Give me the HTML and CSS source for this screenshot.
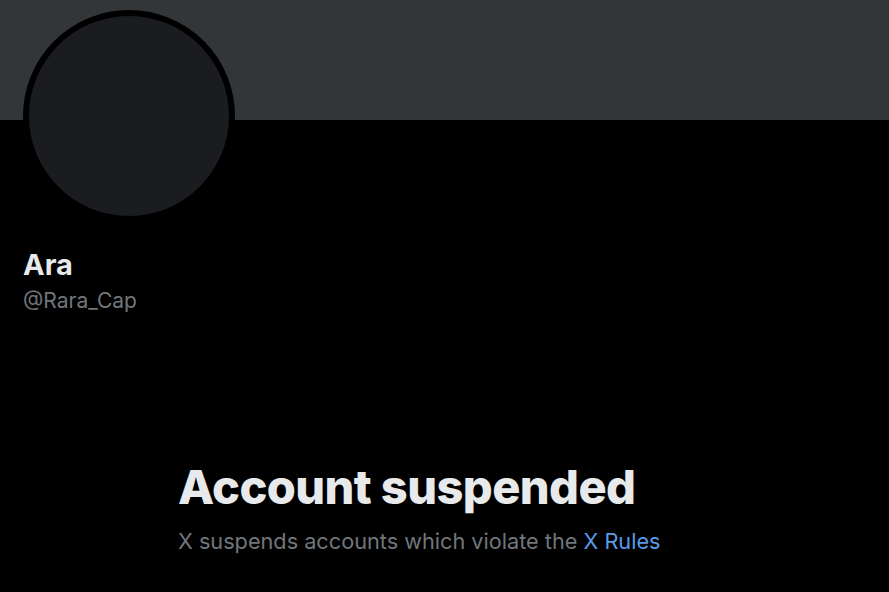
FILE: index.html
```html
<!DOCTYPE html>
<html lang="en">
<head>
<meta charset="utf-8">
<title>Ara (@Rara_Cap) / X</title>
<link rel="stylesheet" href="styles.css">
</head>
<body>
<main class="page">
  <div class="banner"></div>
  <section class="profile">
    <div class="avatar"><div class="avatar-inner"></div></div>
    <h2 class="name">Ara</h2>
    <div class="handle">@Rara_Cap</div>
  </section>
  <section class="empty">
    <h1 class="empty-title">Account suspended</h1>
    <p class="empty-text">X suspends accounts which violate the <a class="link" href="#">X Rules</a></p>
  </section>
</main>
</body>
</html>
```
FILE: styles.css
```css
html, body {
  margin: 0;
  padding: 0;
  background: #000;
}
body {
  font-family: "Inter", "Roboto", "Liberation Sans", sans-serif;
  color: #e7e9ea;
}
.page {
  width: 889px;
  height: 592px;
  overflow: hidden;
}
.banner {
  height: 120px;
  background: #333639;
}
.profile {
  padding-left: 23px;
}
.avatar {
  width: 200px;
  height: 200px;
  margin-top: -110px;
  border: 6px solid #000;
  border-radius: 50%;
  background: #000;
}
.avatar-inner {
  width: 200px;
  height: 200px;
  border-radius: 50%;
  background: #1b1c1f;
}
.name {
  margin: 26px 0 0;
  font-size: 29px;
  font-weight: 700;
  line-height: 34px;
  color: #e7e9ea;
}
.handle {
  margin-top: 6px;
  font-size: 21px;
  line-height: 26px;
  color: #71767b;
}
.empty {
  width: 533px;
  margin: 145px auto 0;
}
.empty-title {
  margin: 0;
  font-size: 47px;
  font-weight: 800;
  line-height: 56px;
  letter-spacing: -0.6px;
  color: #e7e9ea;
}
.empty-text {
  margin: 12px 0 0;
  font-size: 21.7px;
  line-height: 28px;
  color: #71767b;
}
.link {
  color: #5a9be6;
  text-decoration: none;
}
```
